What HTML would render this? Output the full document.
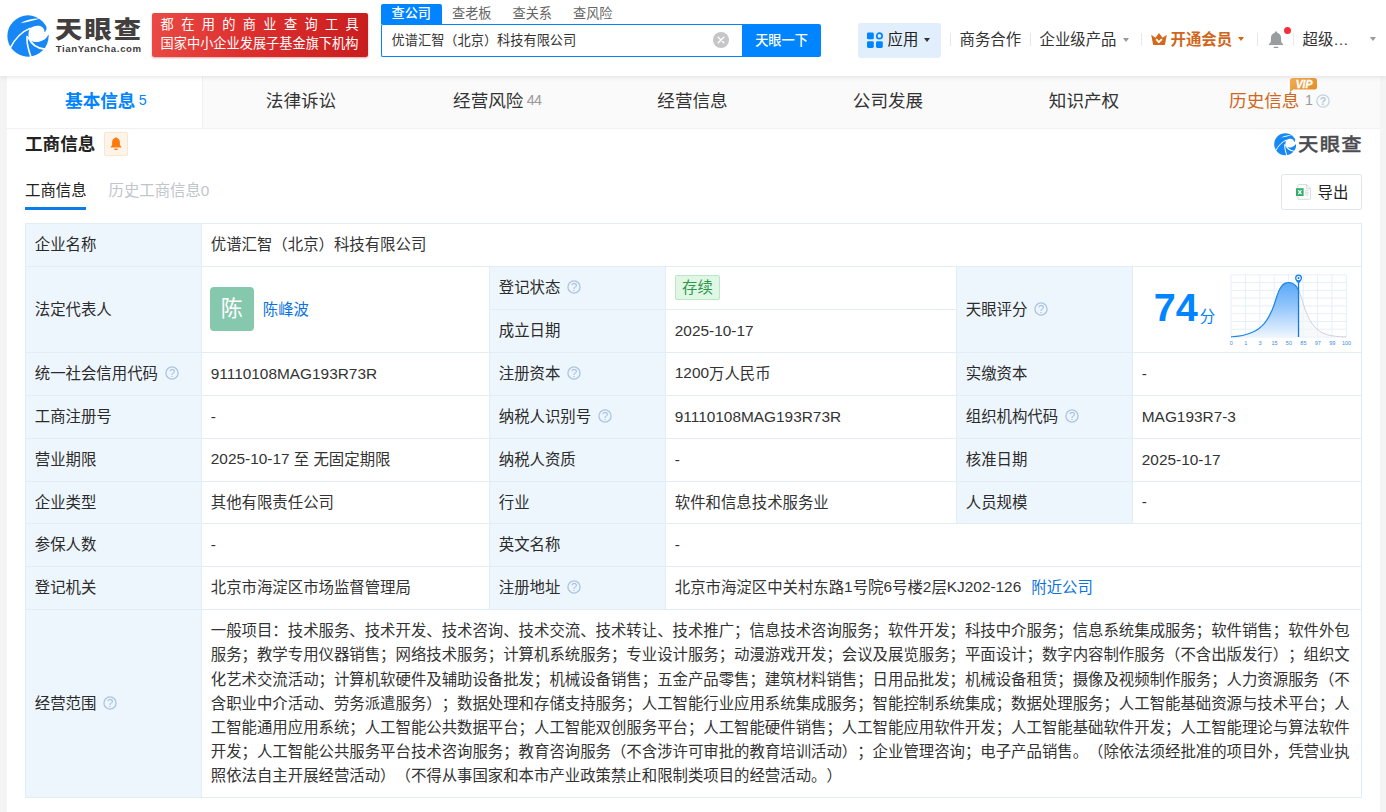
<!DOCTYPE html>
<html lang="zh-CN">
<head>
<meta charset="utf-8">
<title>优谱汇智（北京）科技有限公司 - 天眼查</title>
<style>
*{box-sizing:border-box;margin:0;padding:0}
html,body{width:1386px;height:812px;overflow:hidden}
body{background:#f4f4f4;font-family:"Liberation Sans","Noto Sans CJK SC",sans-serif;color:#333;font-size:15.4px;line-height:24.2px;position:relative}
.abs{position:absolute}
/* ---------- header ---------- */
.header{position:absolute;left:0;top:0;width:1386px;height:76px;background:#fff;box-shadow:0 1px 5px rgba(0,0,0,.10);z-index:5}
.logo-ic{position:absolute;left:7px;top:14.6px;width:42px;height:42px}
.logo-cn{position:absolute;left:54.5px;top:12.5px;width:90px;height:34px;font-weight:900;font-size:23.5px;line-height:34px;color:#433f3e;white-space:nowrap;letter-spacing:1.8px;transform-origin:0 50%;transform:scale(1.16,1)}
.logo-en{position:absolute;left:55.7px;top:43.1px;font-weight:700;font-size:9.6px;line-height:12px;color:#403c3b;letter-spacing:0.64px;white-space:nowrap}
.banner{position:absolute;left:152px;top:13px;width:216px;height:44px;border-radius:2px;background:linear-gradient(100deg,#ea4a45 0%,#dc2f2e 45%,#c91c1e 100%);color:#fff;font-size:13.2px;box-shadow:0 1px 2px rgba(160,0,0,.35)}
.banner div{position:absolute;left:8.6px;white-space:nowrap;line-height:16px;font-weight:400}
.banner .l1{top:4px;letter-spacing:7.36px}
.banner .l2{top:22.5px}
.stabs{position:absolute;left:381px;top:4px;height:20px;display:flex;font-size:13.2px;line-height:19px;color:#666}
.stabs span{width:60.5px;text-align:center;height:20px}
.stabs span.on{background:#0084ff;color:#fff;border-radius:2px 2px 0 0;font-weight:500}
.sbox{position:absolute;left:381px;top:24px;width:361px;height:33px;border:1px solid #0084ff;border-right:none;border-radius:2px 0 0 2px;background:#fff;font-size:13.2px;line-height:32.6px;padding-left:9.6px;color:#333}
.sclear{position:absolute;left:712.5px;top:31.5px;width:16px;height:16px}
.sbtn{position:absolute;left:742px;top:24px;width:79px;height:33px;background:#0084ff;color:#fff;border-radius:0 2px 2px 0;font-size:13.2px;line-height:33px;text-align:center;font-weight:500}
.app{position:absolute;left:858px;top:23px;width:83px;height:34.5px;background:#e1eefc;border-radius:3px}
.nav{position:absolute;top:27.5px;font-size:15.4px;line-height:24px;white-space:nowrap;color:#333}
.sep{position:absolute;top:33px;width:1px;height:13px;background:#e8e8e8}
.caret{position:absolute;width:0;height:0;border-left:3.9px solid transparent;border-right:3.9px solid transparent;border-top:4.5px solid #999}
/* ---------- main ---------- */
.main{position:absolute;left:7px;top:76px;width:1373px;height:736px;background:#fff}
.tabs{position:absolute;left:7px;top:76px;width:1373px;height:53px;background:#fafafa;z-index:2;border-bottom:1px solid #f1f1f1}
.tab{position:absolute;top:0;height:52px;font-size:17.6px;line-height:26px;padding-top:12px;text-align:center;white-space:nowrap;color:#333}
.tab.on{background:#fff;color:#0084ff;font-weight:700;border-right:1px solid #f0f0f0}
.tab small{font-size:14.3px;font-weight:400;margin-left:3.4px;color:#999;position:relative;top:-1.9px;letter-spacing:-0.9px}
.tab.on small{color:#0084ff}
.stitle{position:absolute;left:25px;top:131px;font-size:17.6px;line-height:26px;font-weight:700;color:#222}
.bellbox{position:absolute;left:104px;top:132px;width:24px;height:24px;border:1px solid #ffe4cc;background:#fff4ea;border-radius:2px}
.sub1{position:absolute;left:25px;top:178.5px;font-size:15.4px;line-height:24px;color:#222}
.sub2{position:absolute;left:108.5px;top:178.5px;font-size:15.4px;line-height:24px;color:#c2c6cc}
.subline{position:absolute;left:25px;top:206.5px;width:61px;height:3px;background:#0b7de6}
.export{position:absolute;left:1281px;top:174px;width:81px;height:36px;border:1px solid #dfe3ea;border-radius:2.5px;background:#fff}
.export span{position:absolute;left:35.5px;top:6px;font-size:15.4px;line-height:24px;color:#222}
/* ---------- table ---------- */
.tb{position:absolute;left:25px;top:223px;width:1337px;height:575px;border-right:1px solid #e3edf5;border-bottom:1px solid #e3edf5}
.c{position:absolute;border-left:1px solid #e3edf5;border-top:1px solid #e3edf5;padding:0.8px 0 0 8.8px;display:flex;align-items:center;white-space:nowrap;background:#fff;color:#333}
.c.l{background:#eef6fd;color:#2b2b2b}
.c.n{padding-top:0}
.ln{position:relative;top:-1px}
.q{display:inline-block;width:14px;height:14px;margin-left:6.8px;flex:none;position:relative;top:-1.3px}
.av{position:relative;top:-1px;left:-1px;display:inline-block;width:44px;height:44px;border-radius:4px;background:#86c8ae;color:#fff;font-size:22px;line-height:43px;text-align:center;flex:none}
.nm{margin-left:8px}
.badge{position:relative;top:-0.6px;display:inline-block;height:25px;line-height:23px;padding:0 6.2px;border:1px solid #b9e6c3;background:#e0f7e5;color:#2b9a48;border-radius:2px}
.sc{font-size:39.6px;font-weight:700;color:#0084ff;line-height:44px;margin-left:12px;position:relative;top:-2.5px}
.fen{color:#0084ff;margin-left:2px;position:relative;top:7px}
.chart{position:absolute;left:92px;top:2.5px;width:130px;height:78px}
.scope{width:1141px;line-height:24.2px;text-spacing-trim:space-all;font-kerning:none;font-feature-settings:"palt" 0,"halt" 0,"kern" 0}
.scope div{white-space:nowrap;height:24.2px}
a{color:#0b73e0;text-decoration:none}
</style>
</head>
<body>
<div class="header" id="hdr">
<svg class="logo-ic" viewBox="46 68 688 688"><circle cx="390" cy="412" r="338" fill="#1787f5"/>
<g fill="#fff"><path d="M415 290C470 255 560 225 620 265C650 290 662 320 660 352C682 330 700 300 692 268L780 260L780 392L722 392C700 450 640 500 540 512C500 514 465 505 440 490C420 470 405 450 398 425C394 380 400 330 415 290Z"/>
<path d="M268 204C340 158 460 124 592 126C500 152 390 188 268 204Z"/></g>
<g fill="none" stroke="#fff" stroke-linecap="butt"><path d="M98 610C175 455 290 340 428 283" stroke-width="26"/><path d="M445 770C400 650 362 520 376 410" stroke-width="26"/><path d="M665 626C560 618 450 558 392 430" stroke-width="28"/></g></svg>
<div class="logo-cn">天眼查</div>
<div class="logo-en">TianYanCha.com</div>
<div class="banner"><div class="l1">都在用的商业查询工具</div><div class="l2">国家中小企业发展子基金旗下机构</div></div>
<div class="stabs"><span class="on">查公司</span><span>查老板</span><span>查关系</span><span>查风险</span></div>
<div class="sbox">优谱汇智（北京）科技有限公司</div>
<svg class="sclear" viewBox="0 0 16 16"><circle cx="8" cy="8" r="8" fill="#c6c6c8"/><path d="M5.2 5.2L10.8 10.8M10.8 5.2L5.2 10.8" stroke="#fff" stroke-width="1.4" stroke-linecap="round"/></svg>
<div class="sbtn">天眼一下</div>
<div class="app"></div>
<svg class="abs" style="left:867px;top:32px;width:16.5px;height:16.5px" viewBox="0 0 16.5 16.5"><g fill="#0084ff"><rect x="0" y="0.5" width="6.8" height="6.8" rx="1.4"/><rect x="0" y="9.2" width="6.8" height="6.8" rx="1.4"/><rect x="9" y="9.2" width="6.8" height="6.8" rx="1.4"/></g><circle cx="12.4" cy="3.9" r="2.7" fill="none" stroke="#0084ff" stroke-width="1.7"/></svg>
<div class="nav" style="left:887.5px;color:#222">应用</div>
<div class="caret" style="left:924px;top:38px;border-top-color:#333"></div>
<div class="sep" style="left:950px"></div>
<div class="nav" style="left:959.5px">商务合作</div>
<div class="sep" style="left:1030px"></div>
<div class="nav" style="left:1039.5px">企业级产品</div>
<div class="caret" style="left:1122.5px;top:37.5px"></div>
<div class="sep" style="left:1141px"></div>
<svg class="abs" style="left:1150.5px;top:32.5px;width:16px;height:12.5px" viewBox="0 0 16 12.5"><path d="M0.2 1.8L4.4 4.8L8 0L11.6 4.8L15.8 1.8L14 11.2Q13.8 12.4 12.6 12.4H3.4Q2.2 12.4 2 11.2Z" fill="#d4691b"/><path d="M5.2 6.2L7.8 9.2L10.9 6.2" fill="none" stroke="#fff" stroke-width="1.8" stroke-linejoin="round"/></svg>
<div class="nav" style="left:1170.5px;color:#d0661a;font-weight:700">开通会员</div>
<div class="caret" style="left:1238px;top:37px;border-top-color:#d0661a"></div>
<div class="sep" style="left:1257px"></div>
<svg class="abs" style="left:1268px;top:30.5px;width:16px;height:18px" viewBox="0 0 16 18"><path d="M8 0.6c0.8 0 1.2 0.5 1.2 1.2c2.5 0.7 3.9 2.8 3.9 5.4v3.6l2 2.6v0.7H0.9v-0.7l2-2.6V7.2c0-2.6 1.4-4.7 3.9-5.4C6.8 1.1 7.2 0.6 8 0.6Z" fill="#9a9ca0"/><rect x="5.6" y="15.8" width="4.8" height="1.3" rx="0.6" fill="#9a9ca0"/></svg>
<div class="abs" style="left:1283.8px;top:27px;width:7px;height:7px;border-radius:50%;background:#f5303a"></div>
<div class="sep" style="left:1293px"></div>
<div class="nav" style="left:1302.5px">超级…</div>
<div class="caret" style="left:1370px;top:37px"></div>
</div>
<div class="main"></div>
<div class="tabs" id="tabs">
<div class="tab on" style="left:0;width:196px;padding-left:2px">基本信息<small>5</small></div>
<div class="tab" style="left:196px;width:196px">法律诉讼</div>
<div class="tab" style="left:392px;width:196px">经营风险<small>44</small></div>
<div class="tab" style="left:588px;width:195px">经营信息</div>
<div class="tab" style="left:783px;width:196px">公司发展</div>
<div class="tab" style="left:979px;width:196px">知识产权</div>
<div class="tab" style="left:1175px;width:198px;color:#d0661a"><span style="margin-left:-20px">历史信息</span><small style="margin-left:5.6px;letter-spacing:0">1</small></div>
<div class="abs" style="left:1283px;top:2px;width:27px;height:14px">
<svg style="position:absolute;left:0;top:0;width:27px;height:14px" viewBox="0 0 27 14"><defs><linearGradient id="vg" x1="0" y1="0" x2="1" y2="1"><stop offset="0" stop-color="#f3ae55"/><stop offset="1" stop-color="#e08a22"/></linearGradient></defs><path d="M2.5 0H24.5Q27 0 27 2.5V9Q27 11.5 24.5 11.5H3.2L0 14V2.5Q0 0 2.5 0Z" fill="url(#vg)"/><text x="14" y="9.6" text-anchor="middle" font-family="Liberation Sans, sans-serif" font-size="10.4" font-weight="700" font-style="italic" fill="#fff" stroke="#fff" stroke-width="0.3">VIP</text></svg></div>
<svg class="abs" style="left:1309px;top:17.6px;width:14px;height:14px" viewBox="0 0 14 14"><circle cx="7" cy="7" r="6.2" fill="none" stroke="#c0d1e6" stroke-width="1.3"/><text x="7" y="10.7" text-anchor="middle" font-family="Liberation Sans, sans-serif" font-size="10.5" font-weight="700" fill="#b4c7dd">?</text></svg>
</div>
<div id="sec">
<div class="stitle">工商信息</div>
<div class="bellbox"><svg style="position:absolute;left:5.4px;top:4.4px;width:12px;height:13.5px" viewBox="0 0 12 13.5"><path d="M6 0.2c0.6 0 0.9 0.4 0.9 0.9c1.9 0.5 3 2.1 3 4.1v2.9l1.5 1.9v0.6H0.6v-0.6l1.5-1.9V5.2c0-2 1.1-3.6 3-4.1C5.1 0.6 5.4 0.2 6 0.2Z" fill="#ff7a0d"/><rect x="4.2" y="11.6" width="3.6" height="1.4" rx="0.7" fill="#ff7a0d"/></svg></div>
<svg class="abs" style="left:1273.5px;top:133px;width:22.5px;height:22.5px" viewBox="46 68 688 688"><circle cx="390" cy="412" r="338" fill="#1787f5"/>
<g fill="#fff"><path d="M415 290C470 255 560 225 620 265C650 290 662 320 660 352C682 330 700 300 692 268L780 260L780 392L722 392C700 450 640 500 540 512C500 514 465 505 440 490C420 470 405 450 398 425C394 380 400 330 415 290Z"/>
<path d="M268 204C340 158 460 124 592 126C500 152 390 188 268 204Z"/></g>
<g fill="none" stroke="#fff"><path d="M98 610C175 455 290 340 428 283" stroke-width="30"/><path d="M445 770C400 650 362 520 376 410" stroke-width="30"/><path d="M665 626C560 618 450 558 392 430" stroke-width="32"/></g></svg>
<div class="abs" id="logo2" style="left:1298px;top:127.5px;height:34px;font-weight:500;font-size:18.5px;line-height:34px;color:#4b4b50;-webkit-text-stroke:0.35px #4b4b50;white-space:nowrap;letter-spacing:1.2px;transform-origin:0 50%;transform:scale(1.1,1)">天眼查</div>
<div class="sub1">工商信息</div><div class="sub2">历史工商信息0</div><div class="subline"></div>
<div class="export"><svg style="position:absolute;left:13.5px;top:9px;width:15.3px;height:16px" viewBox="0 0 16.5 17"><path d="M3.2 0.5H11.2L15.8 5V15.2Q15.8 16.4 14.6 16.4H3.2Q2 16.4 2 15.2V1.7Q2 0.5 3.2 0.5Z" fill="#fff" stroke="#d3d6dc" stroke-width="1"/><path d="M11.2 0.5V5H15.8" fill="none" stroke="#d3d6dc" stroke-width="1"/><path d="M10 7.2h3.6M10 9.5h3.6M10 11.8h3.6" stroke="#d3d6dc" stroke-width="1.2"/><rect x="0" y="4.4" width="8.2" height="8.4" fill="#2eae68"/><path d="M2.3 6.4L5.9 10.8M5.9 6.4L2.3 10.8" stroke="#fff" stroke-width="1.4"/></svg><span>导出</span></div>
</div>
<div class="tb" id="tb">
<div class="c l" style="left:0px;top:0px;width:176px;height:43px;">企业名称</div>
<div class="c" style="left:176px;top:0px;width:1160px;height:43px;">优谱汇智（北京）科技有限公司</div>
<div class="c l" style="left:0px;top:43px;width:176px;height:86px;">法定代表人</div>
<div class="c" style="left:176px;top:43px;width:288px;height:86px;"><span class="av">陈</span><a class="nm">陈峰波</a></div>
<div class="c l" style="left:464px;top:43px;width:176px;height:43px;">登记状态<svg class="q" viewBox="0 0 14 14"><circle cx="7" cy="7" r="6.1" fill="none" stroke="#aac4e2" stroke-width="1.3"/><text x="7" y="11" text-anchor="middle" font-family="Liberation Sans, sans-serif" font-size="11" fill="#9fbcdd">?</text></svg></div>
<div class="c" style="left:640px;top:43px;width:291px;height:43px;"><span class="badge">存续</span></div>
<div class="c l" style="left:464px;top:86px;width:176px;height:43px;">成立日期</div>
<div class="c n" style="left:640px;top:86px;width:291px;height:43px;">2025-10-17</div>
<div class="c l" style="left:931px;top:43px;width:176px;height:86px;">天眼评分<svg class="q" viewBox="0 0 14 14"><circle cx="7" cy="7" r="6.1" fill="none" stroke="#aac4e2" stroke-width="1.3"/><text x="7" y="11" text-anchor="middle" font-family="Liberation Sans, sans-serif" font-size="11" fill="#9fbcdd">?</text></svg></div>
<div class="c" style="left:1107px;top:43px;width:229px;height:86px;"><span class="sc">74</span><span class="fen">分</span>
<svg class="chart" viewBox="0 0 130 78">
<g stroke="#e6effb" stroke-width="1" fill="none"><path d="M6.0 4.8V67.0"/><path d="M20.4 4.8V67.0"/><path d="M34.8 4.8V67.0"/><path d="M49.2 4.8V67.0"/><path d="M63.6 4.8V67.0"/><path d="M78.1 4.8V67.0"/><path d="M92.5 4.8V67.0"/><path d="M106.9 4.8V67.0"/><path d="M121.3 4.8V67.0"/><path d="M6.0 4.8H121.3"/><path d="M6.0 12.6H121.3"/><path d="M6.0 20.4H121.3"/><path d="M6.0 28.1H121.3"/><path d="M6.0 35.9H121.3"/><path d="M6.0 43.7H121.3"/><path d="M6.0 51.5H121.3"/><path d="M6.0 59.2H121.3"/><path d="M6.0 67.0H121.3"/></g>
<defs><linearGradient id="cg" x1="0" y1="0" x2="0" y2="1"><stop offset="0" stop-color="#4ea4f8"/><stop offset="0.4" stop-color="#86bffa"/><stop offset="1" stop-color="#edf5fe"/></linearGradient><clipPath id="cl"><rect x="0" y="0" width="73.53" height="78"/></clipPath><clipPath id="cr"><rect x="73.53" y="0" width="60" height="78"/></clipPath></defs>
<path d="M6.00 66.88C7.24 66.75 10.96 66.51 13.49 66.11C16.02 65.71 18.77 65.15 21.17 64.48C23.57 63.80 25.82 63.04 27.90 62.08C29.98 61.11 31.74 60.15 33.66 58.71C35.58 57.27 37.82 55.27 39.42 53.43C41.03 51.59 41.99 49.91 43.27 47.67C44.55 45.42 45.99 42.54 47.11 39.98C48.23 37.42 49.11 34.84 49.99 32.30C50.87 29.75 51.59 26.93 52.39 24.71C53.19 22.48 53.91 20.56 54.79 18.94C55.67 17.33 56.72 15.98 57.68 15.01C58.64 14.03 59.52 13.50 60.56 13.08C61.60 12.67 62.80 12.49 63.92 12.51C65.04 12.52 66.24 12.73 67.28 13.18C68.32 13.63 69.20 14.17 70.16 15.20C71.12 16.22 72.17 17.74 73.05 19.33C73.93 20.91 74.65 22.55 75.45 24.71C76.25 26.87 76.97 29.59 77.85 32.30C78.73 35.00 79.61 38.06 80.73 40.94C81.85 43.82 83.29 47.19 84.57 49.59C85.85 51.99 86.98 53.59 88.42 55.35C89.86 57.11 91.46 58.79 93.22 60.15C94.98 61.52 96.74 62.59 98.98 63.52C101.22 64.44 104.11 65.21 106.67 65.73C109.23 66.24 111.92 66.38 114.35 66.59C116.79 66.80 120.12 66.91 121.27 66.97L121.3 67.0L6.0 67.0Z" fill="url(#cg)" fill-opacity="0.94" clip-path="url(#cl)"/>
<path d="M6.00 66.88C7.24 66.75 10.96 66.51 13.49 66.11C16.02 65.71 18.77 65.15 21.17 64.48C23.57 63.80 25.82 63.04 27.90 62.08C29.98 61.11 31.74 60.15 33.66 58.71C35.58 57.27 37.82 55.27 39.42 53.43C41.03 51.59 41.99 49.91 43.27 47.67C44.55 45.42 45.99 42.54 47.11 39.98C48.23 37.42 49.11 34.84 49.99 32.30C50.87 29.75 51.59 26.93 52.39 24.71C53.19 22.48 53.91 20.56 54.79 18.94C55.67 17.33 56.72 15.98 57.68 15.01C58.64 14.03 59.52 13.50 60.56 13.08C61.60 12.67 62.80 12.49 63.92 12.51C65.04 12.52 66.24 12.73 67.28 13.18C68.32 13.63 69.20 14.17 70.16 15.20C71.12 16.22 72.17 17.74 73.05 19.33C73.93 20.91 74.65 22.55 75.45 24.71C76.25 26.87 76.97 29.59 77.85 32.30C78.73 35.00 79.61 38.06 80.73 40.94C81.85 43.82 83.29 47.19 84.57 49.59C85.85 51.99 86.98 53.59 88.42 55.35C89.86 57.11 91.46 58.79 93.22 60.15C94.98 61.52 96.74 62.59 98.98 63.52C101.22 64.44 104.11 65.21 106.67 65.73C109.23 66.24 111.92 66.38 114.35 66.59C116.79 66.80 120.12 66.91 121.27 66.97L121.3 67.0L6.0 67.0Z" fill="#f4f5f7" fill-opacity="0.6" clip-path="url(#cr)"/>
<path d="M6.00 66.88C7.24 66.75 10.96 66.51 13.49 66.11C16.02 65.71 18.77 65.15 21.17 64.48C23.57 63.80 25.82 63.04 27.90 62.08C29.98 61.11 31.74 60.15 33.66 58.71C35.58 57.27 37.82 55.27 39.42 53.43C41.03 51.59 41.99 49.91 43.27 47.67C44.55 45.42 45.99 42.54 47.11 39.98C48.23 37.42 49.11 34.84 49.99 32.30C50.87 29.75 51.59 26.93 52.39 24.71C53.19 22.48 53.91 20.56 54.79 18.94C55.67 17.33 56.72 15.98 57.68 15.01C58.64 14.03 59.52 13.50 60.56 13.08C61.60 12.67 62.80 12.49 63.92 12.51C65.04 12.52 66.24 12.73 67.28 13.18C68.32 13.63 69.20 14.17 70.16 15.20C71.12 16.22 72.17 17.74 73.05 19.33C73.93 20.91 74.65 22.55 75.45 24.71C76.25 26.87 76.97 29.59 77.85 32.30C78.73 35.00 79.61 38.06 80.73 40.94C81.85 43.82 83.29 47.19 84.57 49.59C85.85 51.99 86.98 53.59 88.42 55.35C89.86 57.11 91.46 58.79 93.22 60.15C94.98 61.52 96.74 62.59 98.98 63.52C101.22 64.44 104.11 65.21 106.67 65.73C109.23 66.24 111.92 66.38 114.35 66.59C116.79 66.80 120.12 66.91 121.27 66.97" fill="none" stroke="#1c84ec" stroke-width="1.2" clip-path="url(#cl)"/>
<path d="M6.00 66.88C7.24 66.75 10.96 66.51 13.49 66.11C16.02 65.71 18.77 65.15 21.17 64.48C23.57 63.80 25.82 63.04 27.90 62.08C29.98 61.11 31.74 60.15 33.66 58.71C35.58 57.27 37.82 55.27 39.42 53.43C41.03 51.59 41.99 49.91 43.27 47.67C44.55 45.42 45.99 42.54 47.11 39.98C48.23 37.42 49.11 34.84 49.99 32.30C50.87 29.75 51.59 26.93 52.39 24.71C53.19 22.48 53.91 20.56 54.79 18.94C55.67 17.33 56.72 15.98 57.68 15.01C58.64 14.03 59.52 13.50 60.56 13.08C61.60 12.67 62.80 12.49 63.92 12.51C65.04 12.52 66.24 12.73 67.28 13.18C68.32 13.63 69.20 14.17 70.16 15.20C71.12 16.22 72.17 17.74 73.05 19.33C73.93 20.91 74.65 22.55 75.45 24.71C76.25 26.87 76.97 29.59 77.85 32.30C78.73 35.00 79.61 38.06 80.73 40.94C81.85 43.82 83.29 47.19 84.57 49.59C85.85 51.99 86.98 53.59 88.42 55.35C89.86 57.11 91.46 58.79 93.22 60.15C94.98 61.52 96.74 62.59 98.98 63.52C101.22 64.44 104.11 65.21 106.67 65.73C109.23 66.24 111.92 66.38 114.35 66.59C116.79 66.80 120.12 66.91 121.27 66.97" fill="none" stroke="#cdd2d9" stroke-width="1" clip-path="url(#cr)"/>
<path d="M73.53 12V67.0" stroke="#1478e0" stroke-width="1.3"/>
<path d="M73.53 14.2C72.33 12 70.03 10.6 70.03 8.1A3.5 3.5 0 1 1 77.03 8.1C77.03 10.6 74.73 12 73.53 14.2Z" fill="#1e82ea"/>
<circle cx="73.53" cy="8.1" r="2.2" fill="#fff"/><circle cx="73.53" cy="8.1" r="1.05" fill="#1e82ea"/>
<g font-family="Liberation Sans, sans-serif" font-size="5.5" fill="#3a8ce8" text-anchor="middle"><text x="6.3" y="75">0</text><text x="20.7" y="75">1</text><text x="35.1" y="75">3</text><text x="49.5" y="75">15</text><text x="63.9" y="75">50</text><text x="78.4" y="75">85</text><text x="92.8" y="75">97</text><text x="107.2" y="75">99</text><text x="121.6" y="75">100</text></g>
</svg></div>
<div class="c l" style="left:0px;top:129px;width:176px;height:43px;">统一社会信用代码<svg class="q" viewBox="0 0 14 14"><circle cx="7" cy="7" r="6.1" fill="none" stroke="#aac4e2" stroke-width="1.3"/><text x="7" y="11" text-anchor="middle" font-family="Liberation Sans, sans-serif" font-size="11" fill="#9fbcdd">?</text></svg></div>
<div class="c n" style="left:176px;top:129px;width:288px;height:43px;">91110108MAG193R73R</div>
<div class="c l" style="left:464px;top:129px;width:176px;height:43px;">注册资本<svg class="q" viewBox="0 0 14 14"><circle cx="7" cy="7" r="6.1" fill="none" stroke="#aac4e2" stroke-width="1.3"/><text x="7" y="11" text-anchor="middle" font-family="Liberation Sans, sans-serif" font-size="11" fill="#9fbcdd">?</text></svg></div>
<div class="c" style="left:640px;top:129px;width:291px;height:43px;"><span><span class="ln">1200</span>万人民币</span></div>
<div class="c l" style="left:931px;top:129px;width:176px;height:43px;">实缴资本</div>
<div class="c n" style="left:1107px;top:129px;width:229px;height:43px;">-</div>
<div class="c l" style="left:0px;top:172px;width:176px;height:43px;">工商注册号</div>
<div class="c n" style="left:176px;top:172px;width:288px;height:43px;">-</div>
<div class="c l" style="left:464px;top:172px;width:176px;height:43px;">纳税人识别号<svg class="q" viewBox="0 0 14 14"><circle cx="7" cy="7" r="6.1" fill="none" stroke="#aac4e2" stroke-width="1.3"/><text x="7" y="11" text-anchor="middle" font-family="Liberation Sans, sans-serif" font-size="11" fill="#9fbcdd">?</text></svg></div>
<div class="c n" style="left:640px;top:172px;width:291px;height:43px;">91110108MAG193R73R</div>
<div class="c l" style="left:931px;top:172px;width:176px;height:43px;">组织机构代码<svg class="q" viewBox="0 0 14 14"><circle cx="7" cy="7" r="6.1" fill="none" stroke="#aac4e2" stroke-width="1.3"/><text x="7" y="11" text-anchor="middle" font-family="Liberation Sans, sans-serif" font-size="11" fill="#9fbcdd">?</text></svg></div>
<div class="c n" style="left:1107px;top:172px;width:229px;height:43px;">MAG193R7-3</div>
<div class="c l" style="left:0px;top:215px;width:176px;height:43px;">营业期限</div>
<div class="c" style="left:176px;top:215px;width:288px;height:43px;"><span><span class="ln">2025-10-17</span> 至 无固定期限</span></div>
<div class="c l" style="left:464px;top:215px;width:176px;height:43px;">纳税人资质</div>
<div class="c n" style="left:640px;top:215px;width:291px;height:43px;">-</div>
<div class="c l" style="left:931px;top:215px;width:176px;height:43px;">核准日期</div>
<div class="c n" style="left:1107px;top:215px;width:229px;height:43px;">2025-10-17</div>
<div class="c l" style="left:0px;top:258px;width:176px;height:42px;">企业类型</div>
<div class="c" style="left:176px;top:258px;width:288px;height:42px;">其他有限责任公司</div>
<div class="c l" style="left:464px;top:258px;width:176px;height:42px;">行业</div>
<div class="c" style="left:640px;top:258px;width:291px;height:42px;">软件和信息技术服务业</div>
<div class="c l" style="left:931px;top:258px;width:176px;height:42px;">人员规模</div>
<div class="c n" style="left:1107px;top:258px;width:229px;height:42px;">-</div>
<div class="c l" style="left:0px;top:300px;width:176px;height:43px;">参保人数</div>
<div class="c n" style="left:176px;top:300px;width:288px;height:43px;">-</div>
<div class="c l" style="left:464px;top:300px;width:176px;height:43px;">英文名称</div>
<div class="c n" style="left:640px;top:300px;width:696px;height:43px;">-</div>
<div class="c l" style="left:0px;top:343px;width:176px;height:43px;">登记机关</div>
<div class="c" style="left:176px;top:343px;width:288px;height:43px;">北京市海淀区市场监督管理局</div>
<div class="c l" style="left:464px;top:343px;width:176px;height:43px;">注册地址<svg class="q" viewBox="0 0 14 14"><circle cx="7" cy="7" r="6.1" fill="none" stroke="#aac4e2" stroke-width="1.3"/><text x="7" y="11" text-anchor="middle" font-family="Liberation Sans, sans-serif" font-size="11" fill="#9fbcdd">?</text></svg></div>
<div class="c" style="left:640px;top:343px;width:696px;height:43px;"><span>北京市海淀区中关村东路<span class="ln">1</span>号院<span class="ln">6</span>号楼<span class="ln">2</span>层<span class="ln">KJ202-126</span><a style="margin-left:10px">附近公司</a></span></div>
<div class="c l" style="left:0px;top:386px;width:176px;height:188px;">经营范围<svg class="q" viewBox="0 0 14 14"><circle cx="7" cy="7" r="6.1" fill="none" stroke="#aac4e2" stroke-width="1.3"/><text x="7" y="11" text-anchor="middle" font-family="Liberation Sans, sans-serif" font-size="11" fill="#9fbcdd">?</text></svg></div>
<div class="c" style="left:176px;top:386px;width:1160px;height:188px;"><div class="scope"><div>一般项目：技术服务、技术开发、技术咨询、技术交流、技术转让、技术推广；信息技术咨询服务；软件开发；科技中介服务；信息系统集成服务；软件销售；软件外包</div><div>服务；教学专用仪器销售；网络技术服务；计算机系统服务；专业设计服务；动漫游戏开发；会议及展览服务；平面设计；数字内容制作服务（不含出版发行）；组织文</div><div>化艺术交流活动；计算机软硬件及辅助设备批发；机械设备销售；五金产品零售；建筑材料销售；日用品批发；机械设备租赁；摄像及视频制作服务；人力资源服务（不</div><div>含职业中介活动、劳务派遣服务）；数据处理和存储支持服务；人工智能行业应用系统集成服务；智能控制系统集成；数据处理服务；人工智能基础资源与技术平台；人</div><div>工智能通用应用系统；人工智能公共数据平台；人工智能双创服务平台；人工智能硬件销售；人工智能应用软件开发；人工智能基础软件开发；人工智能理论与算法软件</div><div>开发；人工智能公共服务平台技术咨询服务；教育咨询服务（不含涉许可审批的教育培训活动）；企业管理咨询；电子产品销售。（除依法须经批准的项目外，凭营业执</div><div>照依法自主开展经营活动）（不得从事国家和本市产业政策禁止和限制类项目的经营活动。）</div></div></div>
</div>
</body>
</html>
